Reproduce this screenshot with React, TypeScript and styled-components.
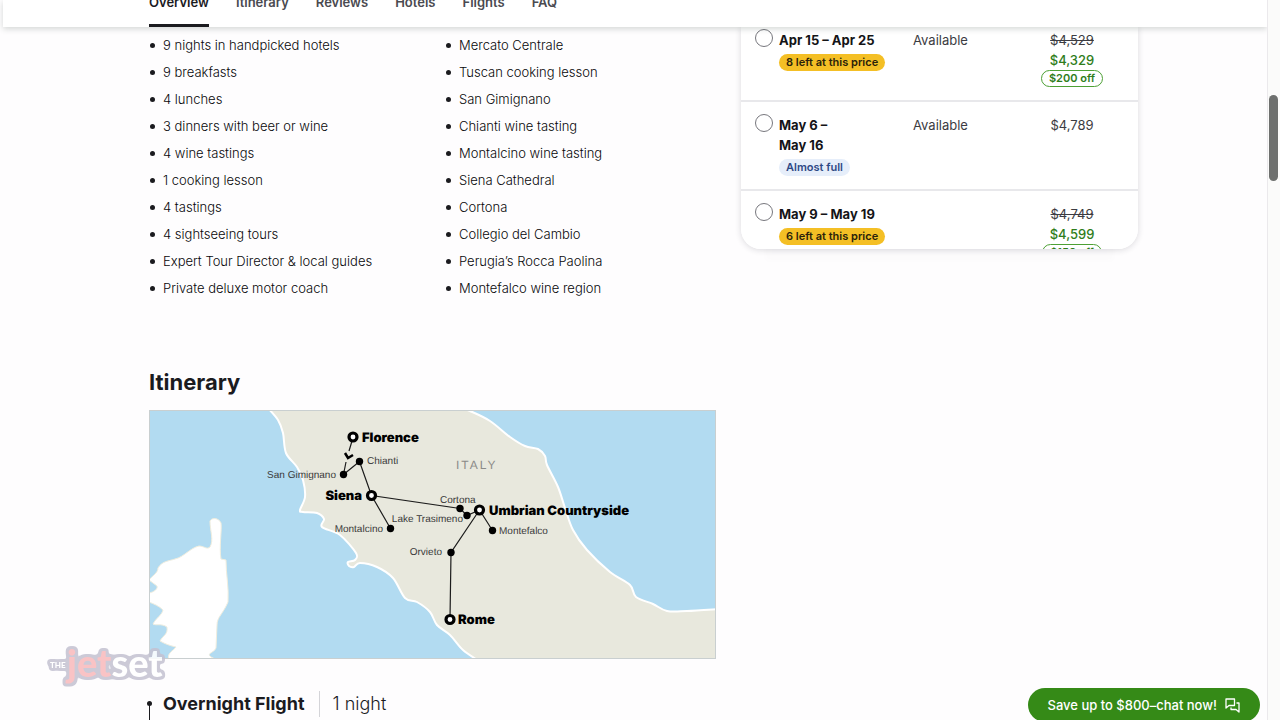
import React from 'react';
import styled, { createGlobalStyle, css } from 'styled-components';

const ink = '#1b1b1f';
const green = '#2f7d1b';

const GlobalStyle = createGlobalStyle`
  *, *::before, *::after { box-sizing: border-box; }
  body { margin: 0; background: #fefdfe; color: ${ink}; font: 400 13px/20px Inter, "Liberation Sans", sans-serif; }
  h2, h3, p, ul { margin: 0; padding: 0; }
`;

const Viewport = styled.div`
  display: flex;
  height: 100vh;
  overflow: hidden;
`;

const Page = styled.div`
  position: relative;
  flex: 1;
  min-width: 0;
  overflow: hidden;
`;

const ScrollTrack = styled.div`
  width: 13px;
  padding: 95px 2px 0 1px;
  background: #fbfbfa;
  border-left: 1px solid #ebe9ec;
`;

const ScrollThumb = styled.div`
  height: 86px;
  border-radius: 5px;
  background: #6e706e;
`;

const Header = styled.header`
  position: relative;
  z-index: 2;
  display: flex;
  align-items: flex-end;
  height: 27px;
  margin-left: 3px;
  padding-left: 146px;
  background: #fff;
  box-shadow: 0 2px 6px rgba(40, 60, 50, 0.2);
`;

const Nav = styled.nav`
  display: flex;
  gap: 27px;
`;

const Tab = styled.a<{ $active?: boolean }>`
  padding-bottom: 12px;
  border-bottom: 3px solid ${(p) => (p.$active ? ink : 'transparent')};
  color: ${(p) => (p.$active ? ink : '#4a4a50')};
  font-weight: 600;
  text-decoration: none;
`;

const Columns = styled.main`
  display: grid;
  grid-template-columns: minmax(0, 1fr) 397px;
  gap: 25px;
  align-items: start;
  padding: 0 129px 0 149px;
`;

const Content = styled.div`
  padding-top: 5px;
`;

const Highlights = styled.div`
  display: grid;
  grid-template-columns: 1fr 1fr;
  gap: 25px;
`;

const BulletList = styled.ul`
  list-style: none;
  color: #08080a;
  font-weight: 300;
`;

const Bullet = styled.li`
  display: flex;
  align-items: center;
  gap: 8px;
  line-height: 27px;
  padding-left: 1px;
  &::before {
    content: '';
    width: 5px;
    height: 5px;
    border-radius: 50%;
    background: ${ink};
  }
`;

const SectionTitle = styled.h2`
  margin: 65px 0 13px;
  font-size: 22px;
  line-height: 30px;
  font-weight: 700;
`;

const MapSvg = styled.svg`
  display: block;
  width: 100%;
  height: auto;
  font-family: "Liberation Sans", Arial, sans-serif;
  text-rendering: geometricPrecision;
`;

const Day = styled.article`
  position: relative;
  display: flex;
  align-items: center;
  margin-top: 32px;
  padding-left: 14px;
  font-size: 18px;
  line-height: 26px;
  &::before {
    content: '';
    position: absolute;
    left: 0;
    top: 13px;
    height: 40px;
    border-left: 1px solid ${ink};
  }
  &::after {
    content: '';
    position: absolute;
    left: -2px;
    top: 10px;
    width: 5px;
    height: 5px;
    border-radius: 50%;
    background: ${ink};
  }
`;

const DayTitle = styled.h3`
  padding-right: 14px;
  border-right: 1px solid #d4d4d8;
  font-size: 18px;
  line-height: 26px;
  font-weight: 700;
`;

const DayLength = styled.p`
  padding-left: 13px;
  font-weight: 300;
`;

const DateCard = styled.fieldset`
  min-width: 0;
  max-height: 222px;
  margin: 0;
  padding: 0;
  overflow: hidden;
  border: 0;
  border-radius: 0 0 20px 20px;
  background: #fff;
  box-shadow: 0 1px 6px rgba(30, 30, 50, 0.16), 0 36px 6px -24px rgba(30, 30, 50, 0.01);
`;

const DateRow = styled.label<{ $first?: boolean }>`
  display: grid;
  grid-template-columns: 18px 128px 1fr 132px;
  gap: 6px;
  align-items: start;
  padding: ${(p) => (p.$first ? 3 : 13)}px 0 13px 14px;
  border-bottom: 2px solid #e8e8eb;
  color: #3c3c42;
`;

const Radio = styled.input`
  appearance: none;
  width: 18px;
  height: 18px;
  margin: -1px 0 0;
  border: 1px solid #77777d;
  border-radius: 50%;
  background: #fff;
`;

const Dates = styled.div`
  display: flex;
  flex-direction: column;
  align-items: flex-start;
  color: #141417;
  font-weight: 700;
`;

const Badge = styled.span<{ $tone: 'yellow' | 'blue' }>`
  margin-top: 4px;
  padding: 0 7px;
  border-radius: 9px;
  font-size: 11px;
  font-weight: 600;
  line-height: 17px;
  ${(p) =>
    p.$tone === 'yellow'
      ? css`background: #f4bf25; color: #2a220a;`
      : css`background: #e6eefa; color: #2f4a86;`}
`;

const Price = styled.div`
  display: flex;
  flex-direction: column;
  align-items: center;
`;

const Sale = styled.strong`
  color: ${green};
  font-weight: 500;
`;

const Discount = styled.span`
  padding: 0 7px;
  border: 1px solid #4da035;
  border-radius: 9px;
  color: ${green};
  font-size: 11px;
  font-weight: 600;
  line-height: 15px;
`;

const ChatButton = styled.button`
  position: fixed;
  right: 20px;
  bottom: -2px;
  display: flex;
  align-items: center;
  gap: 8px;
  height: 34px;
  padding: 0 20px;
  border: 0;
  border-radius: 17px;
  background: #358a17;
  color: #fff;
  font: 500 13px/20px Inter, "Liberation Sans", sans-serif;
`;

const Watermark = styled.svg`
  position: fixed;
  left: 40px;
  bottom: 30px;
  width: 135px;
  height: 50px;
`;

const tabs = ['Overview', 'Itinerary', 'Reviews', 'Hotels', 'Flights', 'FAQ'];

const included = [
  '9 nights in handpicked hotels', '9 breakfasts', '4 lunches', '3 dinners with beer or wine',
  '4 wine tastings', '1 cooking lesson', '4 tastings', '4 sightseeing tours',
  'Expert Tour Director & local guides', 'Private deluxe motor coach',
];

const sights = [
  'Mercato Centrale', 'Tuscan cooking lesson', 'San Gimignano', 'Chianti wine tasting',
  'Montalcino wine tasting', 'Siena Cathedral', 'Cortona', 'Collegio del Cambio',
  'Perugia’s Rocca Paolina', 'Montefalco wine region',
];

type Departure = {
  dates: string[];
  badge: string;
  tone: 'yellow' | 'blue';
  status?: string;
  price: string;
  sale?: string;
  off?: string;
};

const departures: Departure[] = [
  { dates: ['Apr 15 – Apr 25'], badge: '8 left at this price', tone: 'yellow', status: 'Available', price: '$4,529', sale: '$4,329', off: '$200 off' },
  { dates: ['May 6 –', 'May 16'], badge: 'Almost full', tone: 'blue', status: 'Available', price: '$4,789' },
  { dates: ['May 9 – May 19'], badge: '6 left at this price', tone: 'yellow', price: '$4,749', sale: '$4,599', off: '$150 off' },
];

type Point = [number, number];

// Catmull-Rom spline through the given points, as a cubic Bezier path.
function smooth(points: Point[]): string {
  let d = `M${points[0][0]} ${points[0][1]}`;
  for (let i = 0; i < points.length - 1; i++) {
    const a = points[Math.max(i - 1, 0)];
    const b = points[i];
    const c = points[i + 1];
    const e = points[Math.min(i + 2, points.length - 1)];
    d += ` C${b[0] + (c[0] - a[0]) / 6} ${b[1] + (c[1] - a[1]) / 6} ${c[0] - (e[0] - b[0]) / 6} ${c[1] - (e[1] - b[1]) / 6} ${c[0]} ${c[1]}`;
  }
  return d;
}

const westCoast: Point[] = [
  [119, -2], [129, 10], [134, 23], [137, 43], [148, 57], [154, 70], [156, 87], [151, 100], [154, 102],
  [168, 103], [175, 109], [173, 117], [191, 125], [207, 143], [206, 150], [199, 152], [200, 156], [205, 157],
  [211, 153], [228, 157], [244, 168], [256, 188], [268, 192], [281, 202], [288, 215], [301, 225], [314, 240], [330, 251],
];

const eastCoast: Point[] = [
  [570, 199], [538, 201], [518, 201], [504, 194], [487, 187], [481, 175], [461, 162], [438, 140], [424, 120],
  [416, 98], [409, 77], [398, 55], [396, 46], [389, 39], [376, 36], [361, 27], [341, 11], [321, 1], [312, -2],
];

const mainland = `${smooth(westCoast)} L570 251 ${smooth(eastCoast).replace('M', 'L')} Z`;

const cities = [
  { name: 'Florence', x: 204, y: 27, tx: 213, anchor: 'start' },
  { name: 'Siena', x: 222.5, y: 85.5, tx: 213, anchor: 'end' },
  { name: 'Umbrian Countryside', x: 330.5, y: 100, tx: 340, anchor: 'start' },
  { name: 'Rome', x: 301, y: 209.5, tx: 309, anchor: 'start' },
] as const;

const stops = [
  { name: 'Chianti', x: 210.5, y: 51.5, tx: 218, ty: 54, anchor: 'start' },
  { name: 'San Gimignano', x: 194.5, y: 64.5, tx: 187, ty: 68, anchor: 'end' },
  { name: 'Montalcino', x: 241.5, y: 118.5, tx: 234, ty: 122, anchor: 'end' },
  { name: 'Cortona', x: 311, y: 98.5, tx: 291, ty: 93, anchor: 'start' },
  { name: 'Lake Trasimeno', x: 318, y: 105.5, tx: 314, ty: 112, anchor: 'end' },
  { name: 'Montefalco', x: 343.5, y: 120.5, tx: 350, ty: 124, anchor: 'start' },
  { name: 'Orvieto', x: 302, y: 142.5, tx: 293, ty: 145, anchor: 'end' },
] as const;

function RouteMap() {
  return (
    <MapSvg viewBox="0 0 567 249" role="img" aria-label="Tour route map">
      <rect width="567" height="249" fill="#b2dbf1" />
      <path d={mainland} fill="#e8e8dd" stroke="#fff" strokeWidth="2" />
      <path
        d="M61 111 C63 107 70 108 72 113 C73 120 70 137 72 149 L77 150 C77 165 80 177 79 192 C74 204 68 207 68 215 L67 238 C65 243 57 243 62 247 L66 249 L20 249 C17 244 25 240 27 237 C22 236 16 234 11 231 C14 225 19 225 18 217 C12 213 7 216 4 214 C7 208 13 205 14 200 C10 196 5 194 0 192 L0 183 C5 182 9 179 8 176 L0 170 C3 166 9 163 9 158 C13 151 20 151 26 149 C35 147 41 138 50 136 C55 136 58 140 61 137 C65 130 61 121 61 111 Z"
        fill="#fff"
        stroke="#f1eedf"
        strokeWidth="1"
      />
      <g fill="none" stroke="#1c1c1c" strokeWidth="1.2">
        <path d="M203 31 L200 41 M197 52 L194.500 64.500" />
        <path d="M194.500 64.500 L210.500 51.500 L222.500 85.500 L311 98.500 L318 105.500 L330.500 100 L343.500 120.500" />
        <path d="M222.500 85.500 L241.500 118.500 M330.500 100 L302 142.500 L301 209.500" />
      </g>
      <path d="M196 43 L199 48 L204 45" fill="none" stroke="#000" strokeWidth="2.500" />
      {stops.map((s) => (
        <g key={s.name}>
          <circle cx={s.x} cy={s.y} r="3.700" />
          <text x={s.tx} y={s.ty} textAnchor={s.anchor} fontSize="10" fill="#3a3a3a">{s.name}</text>
        </g>
      ))}
      {cities.map((c) => (
        <g key={c.name}>
          <circle cx={c.x} cy={c.y} r="4" fill="#fff" stroke="#000" strokeWidth="3.200" />
          <text x={c.tx} y={c.y + 4.5} textAnchor={c.anchor} fontSize="13" fontWeight="900" fontFamily="Inter, sans-serif">{c.name}</text>
        </g>
      ))}
      <text x="307" y="59" fontSize="12" letterSpacing="2" fill="#8b8b88">ITALY</text>
      <rect x="0.500" y="0.500" width="566" height="248" fill="none" stroke="#c9cfd0" />
    </MapSvg>
  );
}

function JetsetLogo() {
  return (
    <Watermark viewBox="0 0 135 50" role="img" aria-label="The Jetset" opacity="0.85">
      <filter id="logo-outline" x="-20%" y="-20%" width="140%" height="140%" colorInterpolationFilters="sRGB">
        <feMorphology in="SourceAlpha" operator="dilate" radius="2" result="fat" />
        <feGaussianBlur in="fat" stdDeviation="1.5" result="round" />
        <feComponentTransfer in="round" result="edge">
          <feFuncA type="linear" slope="5" intercept="-0.8" />
        </feComponentTransfer>
        <feFlood floodColor="#c3c1d1" />
        <feComposite in2="edge" operator="in" result="outline" />
        <feMerge>
          <feMergeNode in="outline" />
          <feMergeNode in="SourceGraphic" />
        </feMerge>
      </filter>
      <g fontFamily="Lato, sans-serif" fontWeight="900" fill="#fff" filter="url(#logo-outline)">
        <text x="10" y="28" fontSize="8">THE</text>
        <text x="27" y="37" fontSize="38"><tspan fill="#f8b9bb">jet</tspan>set</text>
      </g>
    </Watermark>
  );
}

function ChatIcon() {
  return (
    <svg width="15" height="15" viewBox="0 0 15 15" fill="none" stroke="#fff" strokeWidth="1.300" strokeLinejoin="round" aria-hidden="true">
      <path d="M1 1 H9.500 V7.500 H4 L1 10 Z" />
      <path d="M11.500 5 H14 V14 L11 11.500 H6 V9.500" />
    </svg>
  );
}

export default function App() {
  return (
    <Viewport>
      <GlobalStyle />
      <Page>
        <Header>
          <Nav aria-label="Tour sections">
            {tabs.map((t, i) => (
              <Tab key={t} href={'#' + t.toLowerCase()} $active={i === 0}>{t}</Tab>
            ))}
          </Nav>
        </Header>
        <Columns>
          <Content>
            <Highlights>
              {[included, sights].map((list) => (
                <BulletList key={list[0]}>
                  {list.map((item) => <Bullet key={item}>{item}</Bullet>)}
                </BulletList>
              ))}
            </Highlights>
            <SectionTitle>Itinerary</SectionTitle>
            <RouteMap />
            <Day>
              <DayTitle>Overnight Flight</DayTitle>
              <DayLength>1 night</DayLength>
            </Day>
          </Content>
          <DateCard aria-label="Departure dates">
            {departures.map((d, i) => (
              <DateRow key={d.dates[0]} $first={i === 0}>
                <Radio type="radio" name="departure" />
                <Dates>
                  {d.dates.map((line) => <span key={line}>{line}</span>)}
                  <Badge $tone={d.tone}>{d.badge}</Badge>
                </Dates>
                <span>{d.status}</span>
                <Price>
                  {d.sale ? <s>{d.price}</s> : <span>{d.price}</span>}
                  {d.sale && <Sale>{d.sale}</Sale>}
                  {d.off && <Discount>{d.off}</Discount>}
                </Price>
              </DateRow>
            ))}
          </DateCard>
        </Columns>
      </Page>
      <ScrollTrack aria-hidden="true"><ScrollThumb /></ScrollTrack>
      <JetsetLogo />
      <ChatButton type="button">Save up to $800–chat now!<ChatIcon /></ChatButton>
    </Viewport>
  );
}
